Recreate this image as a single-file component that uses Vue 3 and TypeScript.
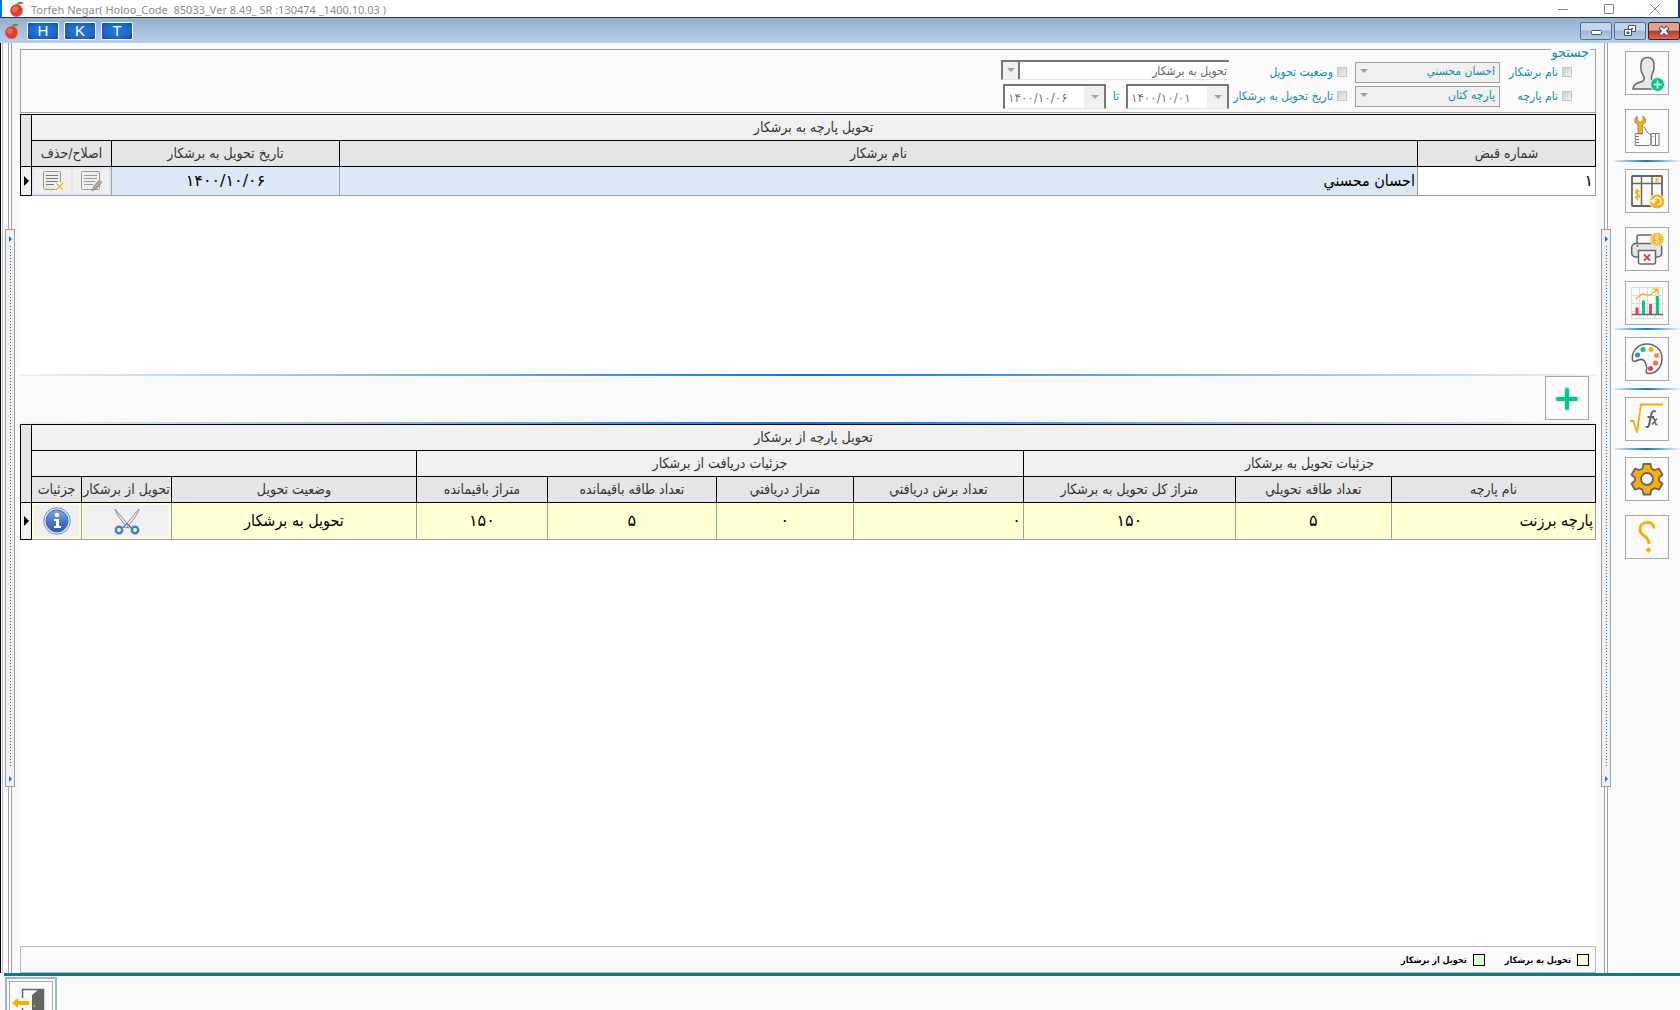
<script setup lang="ts">
import { ref } from 'vue'

interface Tool {
  id: string
  label: string
  tight?: boolean
  rule?: 'after' | 'close'
}

interface Column {
  text: string
  width?: number
}

const title = 'Torfeh Negar( Holoo_Code  85033_Ver 8.49_ SR :130474 _1400.10.03 )'
const shortcuts = ['H', 'K', 'T']

const tools: Tool[] = [
  { id: 'person', label: 'تعريف شخص' },
  { id: 'service', label: 'خدمات', rule: 'after' },
  { id: 'ledger', label: 'جدول قيمت' },
  { id: 'printer', label: 'چاپ', tight: true },
  { id: 'chart', label: 'نمودار', rule: 'close' },
  { id: 'palette', label: 'رنگ', rule: 'after' },
  { id: 'formula', label: 'فرمول', rule: 'after' },
  { id: 'gear', label: 'تنظيمات' },
  { id: 'help', label: 'راهنما' },
]

const deliveryColumns: Column[] = [
  { text: 'اصلاح/حذف', width: 80 },
  { text: 'تاريخ تحويل به برشکار', width: 228 },
  { text: 'نام برشکار' },
  { text: 'شماره قبض', width: 178 },
]

const detailColumns: Column[] = [
  { text: 'جزئيات', width: 50 },
  { text: 'تحويل از برشکار', width: 90 },
  { text: 'وضعيت تحويل' },
  { text: 'متراژ باقيمانده', width: 131 },
  { text: 'تعداد طاقه باقيمانده', width: 169 },
  { text: 'متراژ دريافتي', width: 137 },
  { text: 'تعداد برش دريافتي', width: 170 },
  { text: 'متراژ کل تحويل به برشکار', width: 212 },
  { text: 'تعداد طاقه تحويلي', width: 156 },
  { text: 'نام پارچه', width: 204 },
]

const byCutter = ref(false)
const byFabric = ref(false)
const byStatus = ref(false)
const byDate = ref(false)
</script>

<template>
  <div class="app">
    <header class="titlebar">
      <svg class="logo" viewBox="0 0 16 16" aria-hidden="true">
        <circle cx="7.500" cy="9.500" r="6.300" fill="#e23c31" />
        <circle cx="6" cy="8" r="3" fill="#ee6a55" />
        <path d="M12 5c2 3 2 7-1 9 3-1 4-7 1-9z" fill="#f0942c" />
        <path d="M7 4C9 0 13 0 15 3c-3-1-5 1-8 1z" fill="#4b9b45" />
      </svg>
      <span class="caption">{{ title }}</span>
      <div class="window-buttons">
        <button type="button" aria-label="Minimize"><svg viewBox="0 0 12 12"><path d="M1 6.500h10" /></svg></button>
        <button type="button" aria-label="Maximize"><svg viewBox="0 0 12 12"><path d="M1.500 1.500h9v9h-9z" /></svg></button>
        <button type="button" aria-label="Close"><svg viewBox="0 0 12 12"><path d="M1 1l10 10M11 1L1 11" /></svg></button>
      </div>
    </header>

    <nav class="mdibar">
      <svg class="logo" viewBox="0 0 16 16" aria-hidden="true">
        <circle cx="7.500" cy="9.500" r="6.300" fill="#e23c31" />
        <circle cx="6" cy="8" r="3" fill="#ee6a55" />
        <path d="M12 5c2 3 2 7-1 9 3-1 4-7 1-9z" fill="#f0942c" />
        <path d="M7 4C9 0 13 0 15 3c-3-1-5 1-8 1z" fill="#4b9b45" />
      </svg>
      <button v-for="key in shortcuts" :key="key" type="button" class="shortcut">{{ key }}</button>
      <div class="mdi-buttons">
        <button type="button" aria-label="Minimize child">
          <svg viewBox="0 0 14 12"><rect x="2.500" y="5.500" width="10" height="4" rx="1" fill="#fff" stroke="#44506a" /></svg>
        </button>
        <button type="button" aria-label="Restore child">
          <svg viewBox="0 0 14 12">
            <path d="M5.500.5h7v6h-7z" fill="#fff" stroke="#44506a" /><path d="M8 3h2v1.500H8z" fill="#44506a" />
            <path d="M1.500 4.500h7v6h-7z" fill="#fff" stroke="#44506a" /><path d="M4 7h2v1.500H4z" fill="#8ba4c4" stroke="#44506a" />
          </svg>
        </button>
        <button type="button" class="close" aria-label="Close child">
          <svg viewBox="0 0 14 12">
            <path d="M3 2l8 8M11 2l-8 8" stroke="#4d3038" stroke-width="4.500" /><path d="M3.500 2.500l7 7M10.500 2.500l-7 7" stroke="#fff" stroke-width="2.500" />
          </svg>
        </button>
      </div>
    </nav>

    <div class="workspace">
      <div class="splitter"><i class="rail"></i><div class="grip"><b></b><i></i><b></b></div><i class="rail"></i></div>

      <main class="page">
        <fieldset class="search" dir="rtl">
          <legend>جستجو</legend>
          <label class="check"><input v-model="byCutter" type="checkbox" />نام برشکار</label>
          <span class="combo"><select aria-label="نام برشکار"><option>احسان محسني</option></select><i></i></span>
          <label class="check second"><input v-model="byStatus" type="checkbox" />وضعيت تحويل</label>
          <span class="combo sunken"><select aria-label="وضعيت تحويل"><option>تحويل به برشکار</option></select><i></i></span>

          <label class="check"><input v-model="byFabric" type="checkbox" />نام پارچه</label>
          <span class="combo"><select aria-label="نام پارچه"><option>پارچه کتان</option></select><i></i></span>
          <label class="check second"><input v-model="byDate" type="checkbox" />تاريخ تحويل به برشکار</label>
          <div class="range">
            <span class="combo date"><select dir="ltr" aria-label="از تاريخ"><option>۱۴۰۰/۱۰/۰۱</option></select><i></i></span>
            <span>تا</span>
            <span class="combo date"><select dir="ltr" aria-label="تا تاريخ"><option>۱۴۰۰/۱۰/۰۶</option></select><i></i></span>
          </div>
        </fieldset>

        <section class="upper">
          <table class="grid">
            <colgroup>
              <col class="mark-col" />
              <col v-for="c in deliveryColumns" :key="c.text" :style="c.width ? { width: c.width + 'px' } : undefined" />
            </colgroup>
            <thead>
              <tr><th rowspan="2" class="mark"></th><th colspan="4" class="band">تحويل پارچه به برشکار</th></tr>
              <tr><th v-for="c in deliveryColumns" :key="c.text">{{ c.text }}</th></tr>
            </thead>
            <tbody>
              <tr class="selected">
                <td class="mark"><i class="pointer"></i></td>
                <td class="actions">
                  <div class="pair">
                    <button type="button" aria-label="حذف">
                      <svg viewBox="0 0 24 22">
                        <rect x="3.500" y="1.500" width="17" height="18" rx="1" fill="#eee" stroke="#999" />
                        <path d="M6 5.500h12M6 8.500h12M6 11.500h12M6 14.500h8" stroke="#777" />
                        <path d="M16 13l7 7M23 13l-7 7" stroke="#fff" stroke-width="4" /><path d="M16 13l7 7M23 13l-7 7" stroke="#f5b32c" stroke-width="1.500" />
                      </svg>
                    </button>
                    <button type="button" aria-label="اصلاح">
                      <svg viewBox="0 0 24 22">
                        <rect x="2.500" y="1.500" width="18" height="18" rx="1" fill="#eee" stroke="#999" />
                        <path d="M5 5.500h13M5 8.500h13M5 11.500h11M5 14.500h9" stroke="#999" />
                        <path d="M13 21l2-5 5-6 3 2-5 6z" fill="#aaa" stroke="#777" stroke-width=".7" /><path d="M19 11l1-1 3 2-1 2z" fill="#d7a56b" />
                      </svg>
                    </button>
                  </div>
                </td>
                <td>۱۴۰۰/۱۰/۰۶</td>
                <td class="start name" dir="rtl">احسان محسني</td>
                <td class="start plain" dir="rtl">۱</td>
              </tr>
            </tbody>
          </table>
        </section>

        <div class="toolbar">
          <button type="button" class="tool" aria-label="افزودن">
            <svg viewBox="1 1 42 42"><path d="M22 13.500v19M12.500 23h19" stroke="#c9efe0" stroke-width="6" stroke-linecap="round" /><path d="M22 14v18M13 23h18" stroke="#04c888" stroke-width="4" stroke-linecap="round" /></svg>
          </button>
        </div>

        <section class="lower">
          <table class="grid details">
            <colgroup>
              <col class="mark-col" />
              <col v-for="c in detailColumns" :key="c.text" :style="c.width ? { width: c.width + 'px' } : undefined" />
            </colgroup>
            <thead>
              <tr><th rowspan="3" class="mark"></th><th colspan="10" class="band">تحويل پارچه از برشکار</th></tr>
              <tr>
                <th colspan="3" class="band"></th>
                <th colspan="4" class="band">جزئيات دريافت از برشکار</th>
                <th colspan="3" class="band">جزئيات تحويل به برشکار</th>
              </tr>
              <tr><th v-for="c in detailColumns" :key="c.text">{{ c.text }}</th></tr>
            </thead>
            <tbody>
              <tr class="pending">
                <td class="mark"><i class="pointer"></i></td>
                <td class="actions">
                  <div class="pair">
                    <button type="button" aria-label="جزئيات">
                      <svg class="info" viewBox="0 0 28 28">
                        <defs><linearGradient id="orb" x1="0" y1="0" x2="0" y2="1"><stop offset="0" stop-color="#86a9d8" /><stop offset=".5" stop-color="#4a7cc4" /><stop offset="1" stop-color="#2c59a8" /></linearGradient></defs>
                        <circle cx="14" cy="14" r="13.300" fill="#dfe6f1" stroke="#7a92bb" /><circle cx="14" cy="14" r="11" fill="url(#orb)" stroke="#3c68b0" />
                        <circle cx="14" cy="8" r="2.300" fill="#fff" /><path d="M11 12h5v7h2v2h-7v-2h2v-5h-2z" fill="#fff" />
                      </svg>
                    </button>
                  </div>
                </td>
                <td class="actions">
                  <div class="pair">
                    <button type="button" aria-label="تحويل از برشکار">
                      <svg class="info" viewBox="0 0 28 28">
                        <path d="M2 2l15 18-2 1C9 14 4 9 2 2z" fill="#eceff4" stroke="#7f8896" /><path d="M26 2L11 20l2 1c6-7 11-12 13-19z" fill="#f6f7fa" stroke="#7f8896" />
                        <circle cx="6" cy="23" r="3.200" fill="#fff" stroke="#3a82c6" stroke-width="2.500" /><circle cx="22" cy="23" r="3.200" fill="#fff" stroke="#3a82c6" stroke-width="2.500" />
                        <path d="M9 21l5-4 5 4" fill="none" stroke="#6d7f98" stroke-width="1.500" />
                      </svg>
                    </button>
                  </div>
                </td>
                <td class="name">تحويل به برشکار</td>
                <td>۱۵۰</td>
                <td>۵</td>
                <td>۰</td>
                <td class="start" dir="rtl">۰</td>
                <td>۱۵۰</td>
                <td>۵</td>
                <td class="start name" dir="rtl">پارچه برزنت</td>
              </tr>
            </tbody>
          </table>
        </section>

        <div class="legend" dir="rtl">
          <span><i class="swatch out"></i>تحويل به برشکار</span>
          <span><i class="swatch in"></i>تحويل از برشکار</span>
        </div>
      </main>

      <div class="splitter"><i class="rail"></i><div class="grip"><b></b><i></i><b></b></div><i class="rail"></i></div>

      <aside class="sidebar">
        <template v-for="t in tools" :key="t.id">
          <button type="button" class="tool" :class="{ tight: t.tight, ruled: t.rule }" :aria-label="t.label">
            <svg viewBox="1 1 42 42" fill="none">
              <g v-if="t.id === 'person'">
                <path d="M8 38c0-5 5-6 9-7.500 3-1 2.500-4 1-6.500-2-3-2.500-7-2-11 .5-4.500 3-6.500 6.500-6.500s6 2 6.500 6.500c.5 4-.5 8-2 11-1 3-1 5 1 6l3 8z" fill="#e8e8e8" stroke="#666" stroke-width="1.500" />
                <circle cx="32.500" cy="33.500" r="7" fill="#04c888" stroke="#fafafa" /><path d="M32.500 29.500v8M28.500 33.500h8" stroke="#fff" stroke-width="1.500" />
              </g>
              <g v-else-if="t.id === 'service'">
                <path d="M12 7l-2 2.500v4l3 2.500v9h4.500v-9l3-2.500v-4L18 7v5h-1.500L15 13.500 12.500 12z" fill="#fbad08" stroke="#8c7440" stroke-width=".7" />
                <path d="M18 24.500H10.500q-1 1.500 0 3-1 1.500 0 3-1 1.500 0 3-1 1.500 0 3H24l2-2V26l-4-3-3-5.500M10.500 27.500H14M10.500 30.500H14M10.500 33.500H14" fill="none" stroke="#777" />
                <path d="M26 24.500h8v12h-8zM30.500 24.500v12" stroke="#777" /><circle cx="28" cy="27.500" r=".6" fill="#666" />
              </g>
              <g v-else-if="t.id === 'ledger'">
                <rect x="7" y="7" width="30" height="30" rx="1" stroke="#666" stroke-width="1.800" /><path d="M7 14.500h30M16.500 7v30M27 7v30" stroke="#666" stroke-width="1.500" />
                <path d="M14.500 22.500c-1-1.500-4-1.500-4.200.5 0 2.500 4.200 1.500 4.200 4.200-.2 2-3.500 2-4.500.3M12.300 19.500v12" stroke="#fbad08" stroke-width="1.500" />
                <path d="M32 8.500v5M30 9.500l4 3M34 9.500l-4 3" stroke="#fbad08" />
                <circle cx="32" cy="32.500" r="7.500" fill="#fbad08" stroke="#fafafa" /><path d="M28.500 32a3.700 3.700 0 1 1 3.500 4M26.500 31.500h4l-2 2.500z" stroke="#fff" stroke-width="1.500" />
              </g>
              <g v-else-if="t.id === 'printer'">
                <path d="M12 17V9.500q0-1.500 1.500-1.500H30v9" stroke="#666" stroke-width="1.500" />
                <rect x="6.700" y="16.500" width="30" height="13.500" rx="4" fill="#e4e4e4" stroke="#666" stroke-width="1.500" />
                <path d="M13.500 23.500h17V35q0 2-2 2h-13q-2 0-2-2z" fill="#fff" stroke="#666" stroke-width="1.500" /><circle cx="12.500" cy="19" r="1" fill="#666" />
                <path d="M19 27.500l6 6M25 27.500l-6 6" stroke="#e5424b" stroke-width="2" />
                <circle cx="32" cy="12.500" r="7" fill="#fbad08" stroke="#fafafa" /><circle cx="32" cy="12.500" r="5" stroke="#fff" stroke-width=".6" />
                <path d="M34 10.500c-1-1.200-3.800-1.200-4 .3 0 2 4 1 4 3.200-.2 1.500-3 1.500-4 .2M32 8.500v8" stroke="#fff" />
              </g>
              <g v-else-if="t.id === 'chart'">
                <path d="M6.500 6.500h31v31h-31zM14.500 6.500v31M22.500 6.500v31M30.500 6.500v31M6.500 14.500h31M6.500 22.500h31M6.500 30.500h31" stroke="#ddd" />
                <path d="M12 26.500V33M25.500 23v10" stroke="#e5424b" stroke-width="3" /><path d="M18.500 19.500V33M32.500 15v18" stroke="#04c888" stroke-width="3" />
                <path d="M7 33.500h31" stroke="#666" stroke-width="1.500" /><path d="M11 18l6-5 8 1 8-6M27 8h6v6" stroke="#fbad08" stroke-width="1.200" />
              </g>
              <g v-else-if="t.id === 'palette'">
                <path d="M7.500 23.500C6 14 13 7 22 7c8.500 0 15 6 15 14.500S31 37 23 36.500c-4-1 0-4-1.500-7.500-1-5-3.500-8-8-6-3 1.500-4.500 2-6 .5z" stroke="#666" stroke-width="1.500" />
                <circle cx="12.500" cy="18" r="2.500" fill="#189bb0" /><circle cx="18" cy="12.500" r="2.500" fill="#04c888" /><circle cx="26" cy="12.500" r="2.500" fill="#fbad08" />
                <circle cx="31.500" cy="18.500" r="2.500" fill="#f1934c" /><circle cx="30.500" cy="26" r="2.500" fill="#f0703f" /><circle cx="25.500" cy="31.500" r="2.500" fill="#e5424b" />
              </g>
              <g v-else-if="t.id === 'formula'">
                <path d="M5 24h3.500L12 35.500 16 7.500h22" stroke="#fbad08" stroke-width="1.800" />
                <path d="M31 14.500c-2.500-1.500-4 0-4.600 3L24 28c-.5 2-1.700 2.500-3.500 1.500M22.500 20h6.500" stroke="#666" stroke-width="2" />
                <path d="M27.500 21.500q1.500-.5 2 1l1 4q.5 1.500 2 .7M32 21.500l-5 6" stroke="#666" stroke-width="1.600" />
              </g>
              <g v-else-if="t.id === 'gear'">
                <path d="M18.500 7h7l1 4.500 3 1.700 4.500-1.500 3.500 6-3.500 3v3l3.500 3-3.500 6-4.500-1.500-3 1.700-1 4.600h-7l-1-4.600-3-1.700L10 32.700l-3.500-6 3.500-3v-3l-3.500-3 3.500-6 4.500 1.500 3-1.700z" fill="#fbad08" stroke="#666" stroke-width="1.800" stroke-linejoin="round" />
                <circle cx="22" cy="22" r="6" fill="#fafafa" stroke="#666" stroke-width="1.800" />
              </g>
              <g v-else>
                <path d="M29 13.500C28.500 9 26 7.500 22.500 7.500c-5 0-7.500 3.200-7.500 7 0 7.500 9 5 9 14.500" stroke="#fbad08" stroke-width="3" />
                <path d="M23.500 32l3 3-3 3-3-3z" fill="#fbad08" />
              </g>
            </svg>
          </button>
          <hr v-if="t.rule" :class="t.rule" />
        </template>
      </aside>
    </div>

    <footer class="dock">
      <button type="button" class="exit" aria-label="خروج">
        <span>
          <svg viewBox="1 1 42 42">
            <path d="M13.500 17V8.500h21V43h-21V27" fill="none" stroke="#666" stroke-width="1.500" />
            <path d="M23 14l6-5h6v34H23z" fill="#666" /><circle cx="25.500" cy="25" r="1" fill="#fbad08" /><path d="M3 22l6-5v3h11v4H9v3z" fill="#fbad08" />
          </svg>
        </span>
      </button>
    </footer>
  </div>
</template>

<style>
body {
  background: #fafafa;
}
</style>

<style scoped>
* {
  box-sizing: border-box;
}

.app {
  display: flex;
  flex-direction: column;
  height: 100vh;
  overflow: hidden;
  background: #fafafa;
  font-family: "DejaVu Sans Condensed", "DejaVu Sans", sans-serif;
  font-size: 12px;
  color: #222;
}

button,
select {
  font: inherit;
  color: inherit;
  margin: 0;
  padding: 0;
}

svg {
  display: block;
}

.titlebar {
  display: flex;
  flex: none;
  align-items: center;
  height: 18px;
  padding-left: 7px;
  background: #fff;
  border-left: 2px solid #0078d7;
  border-right: 2px solid #123a86;
  border-bottom: 1px solid #2b3444;
}

.logo {
  width: 16px;
  height: 16px;
}

.caption {
  margin-left: 6px;
  padding-top: 2px;
  font-family: "Noto Sans", sans-serif;
  font-size: 11px;
  line-height: 16px;
  white-space: pre;
  color: #8c8c8c;
}

.window-buttons {
  display: flex;
  margin-left: auto;
}

.window-buttons button {
  display: flex;
  justify-content: center;
  width: 46px;
  border: 0;
  background: none;
}

.window-buttons svg {
  width: 12px;
  height: 12px;
  fill: none;
  stroke: #888;
}

.mdibar {
  display: flex;
  flex: none;
  align-items: center;
  gap: 5px;
  height: 25px;
  padding-left: 4px;
  background: linear-gradient(#95afcf, #b7cfea);
}

.shortcut {
  width: 32px;
  height: 18px;
  border: 1px solid #f4f8fd;
  border-radius: 2px;
  background: radial-gradient(#1f74d6 30%, #1d64c0 70%, #103f8c);
  font-family: "Liberation Sans", sans-serif;
  font-size: 15px;
  line-height: 16px;
  color: #fff;
}

.shortcut:first-of-type {
  margin-left: 2px;
}

.mdi-buttons {
  display: flex;
  gap: 2px;
  margin-left: auto;
}

.mdi-buttons button {
  display: flex;
  align-items: center;
  justify-content: center;
  width: 32px;
  height: 18px;
  border: 1px solid #586e8e;
  border-radius: 2px;
  background: linear-gradient(#c4d6ea 45%, #9bb5d3 50%, #b5cce5);
}

.mdi-buttons svg {
  width: 14px;
  height: 12px;
}

.mdi-buttons .close {
  border-color: #56181c;
  background: linear-gradient(#e3a298 45%, #b93c28 50%, #d2715c);
}

.workspace {
  display: flex;
  flex: 1;
  min-height: 0;
  padding-left: 1px;
  border-left: 1px solid #000;
}

.workspace::before {
  content: "";
  width: 1px;
  margin-right: 2px;
  background: #a9c6ea;
}

.splitter {
  display: flex;
  flex: none;
  flex-direction: column;
  align-items: center;
  width: 10px;
}

.rail {
  flex: 1;
  width: 4px;
  border: solid #a0a0a0;
  border-width: 0 1px;
}

.grip {
  display: flex;
  flex: none;
  flex-direction: column;
  align-items: center;
  width: 10px;
  height: 60%;
  padding: 6px 0 4px;
  border: 1px solid #a0a0a0;
  background: #f0f0f0;
}

.grip i {
  flex: 1;
  width: 1px;
  margin: 4px 0 8px;
  background: repeating-linear-gradient(#0a78d4 0 1px, transparent 1px 3px);
}

.grip b,
.pointer {
  display: block;
  width: 0;
  border: solid transparent;
  border-width: 3px 0 3px 3px;
  border-left-color: #0a78d4;
}

.page {
  display: flex;
  flex: 1;
  flex-direction: column;
  min-width: 0;
  padding: 0 5px;
}

.search {
  display: grid;
  flex: none;
  grid-template-columns: 74px 145px 126px 228px;
  grid-template-rows: 24px 24px;
  align-content: start;
  min-width: 0;
  height: 68px;
  margin: 2px 0 1px;
  padding: 7px 21px 0 0;
  border: 1px solid #a0a0a0;
  font-size: 12px;
  line-height: 14px;
  color: #128fa3;
}

.search legend {
  height: 8px;
  margin-right: -16px;
  padding: 0 1px;
  font-size: 14px;
  line-height: 14px;
}

.check {
  display: flex;
  align-items: center;
  gap: 4px;
  padding-right: 2px;
  white-space: nowrap;
}

.check.second {
  padding-right: 8px;
}

.check input {
  width: 10px;
  height: 10px;
  margin: 0;
  appearance: none;
  border: 1px solid #c4c4c4;
  background: linear-gradient(135deg, #c9ccd2, #f4f4f4);
}

.combo {
  position: relative;
  align-self: center;
  height: 21px;
}

.combo select {
  display: block;
  width: 100%;
  height: 100%;
  padding: 0 4px 2px 18px;
  appearance: none;
  border: 1px solid #a0a0a0;
  border-radius: 0;
  background: #f0f0f0;
}

.combo i {
  position: absolute;
  top: 7px;
  left: 5px;
  width: 0;
  border: solid transparent;
  border-width: 4px 4px 0;
  border-top-color: #a0a0a0;
  pointer-events: none;
}

.combo.sunken {
  align-self: start;
  height: 20px;
}

.sunken select {
  padding: 0 2px 0 18px;
  border-color: #777 #e3e3e3 #e3e3e3 #777;
  border-width: 2px 0 1px 2px;
  background: linear-gradient(90deg, #f0f0f0 15px, #777 15px 17px, #fff 17px);
  color: #666;
}

.sunken i {
  top: 8px;
  left: 6px;
}

.range {
  display: flex;
  align-items: start;
  justify-content: space-between;
  padding-left: 2px;
  line-height: 24px;
}

.combo.date {
  align-self: start;
  width: 103px;
  height: 25px;
}

.date select {
  padding: 0 24px 4px 3px;
  border-color: #777 #777 #e3e3e3;
  border-width: 2px 2px 1px;
  background: linear-gradient(270deg, #f0f0f0 20px, #fff 20px);
  font-family: "DejaVu Sans", sans-serif;
  color: #777;
}

.date i {
  top: 11px;
  right: 7px;
  left: auto;
}

.upper,
.lower {
  background: #fff;
}

.upper {
  flex: none;
  height: 260px;
}

.lower {
  flex: 1;
  min-height: 0;
}

.grid {
  width: 100%;
  border-collapse: collapse;
  table-layout: fixed;
}

.mark-col {
  width: 11px;
}

.grid th {
  height: 26px;
  padding: 0 0 2px;
  border: 1px solid #000;
  background: #e5e5e5;
  font-size: 14px;
  font-weight: 400;
  line-height: 20px;
  white-space: nowrap;
  color: #333;
}

.grid th.band {
  background: #f0f0f0;
}

.grid th.mark {
  background: #e5e5e5;
}

.grid td {
  height: 29px;
  padding: 0;
  border: 1px solid #a0a0a0;
  font-family: "DejaVu Sans", sans-serif;
  font-size: 16px;
  line-height: 20px;
  text-align: center;
  white-space: nowrap;
  color: #000;
}

.grid td.name {
  font-family: inherit;
}

.details td {
  height: 37px;
}

.grid td.mark {
  border: 1px solid #000;
  background: #f0f0f0;
}

.grid td.start {
  padding: 0 2px;
  text-align: start;
}

.selected td {
  background: #dce8f6;
}

.selected td.plain {
  background: #fff;
}

.pending td {
  background: #ffffd4;
}

.pointer {
  margin-left: 3px;
  border-width: 5px 0 5px 5px;
  border-left-color: #000;
}

.pair {
  display: flex;
  gap: 2px;
  height: 24px;
  margin: 0 2px;
}

.details .pair {
  height: 32px;
}

.pair button {
  display: flex;
  flex: 1;
  align-items: center;
  justify-content: center;
  border: 0;
  background: #f0f0f0;
}

.pair svg {
  width: 24px;
  height: 22px;
  fill: none;
}

.pair .info {
  width: 28px;
  height: 28px;
}

.toolbar {
  display: flex;
  flex: none;
  justify-content: flex-end;
  height: 50px;
  padding-right: 7px;
  border: solid;
  border-width: 2px 0;
  border-image: linear-gradient(90deg, #f0f0f0, #0a78d4, #f0f0f0) 2;
}

.tool {
  flex: none;
  width: 44px;
  height: 44px;
  border: 1px solid #a8a8a8;
  background: #fafafa;
}

.tool svg {
  width: 42px;
  height: 42px;
}

.legend {
  display: flex;
  flex: none;
  align-items: center;
  gap: 20px;
  height: 27px;
  padding-right: 6px;
  border: 1px solid #b9b9b9;
  font-size: 9px;
  font-weight: 700;
  line-height: 14px;
  color: #000;
}

.legend span {
  display: flex;
  align-items: center;
  gap: 6px;
}

.swatch {
  width: 12px;
  height: 12px;
  border: 1px solid #000;
}

.swatch.out {
  background: #ffffd4;
}

.swatch.in {
  background: #ddffd4;
}

.sidebar {
  display: flex;
  flex: none;
  flex-direction: column;
  align-items: center;
  width: 69px;
  padding-top: 8px;
  padding-left: 2px;
}

.sidebar .tool {
  margin-bottom: 14px;
}

.sidebar .tool.tight {
  margin-bottom: 10px;
}

.sidebar .tool.ruled {
  margin-bottom: 0;
}

.sidebar hr {
  flex: none;
  width: 100%;
  height: 2px;
  margin: 7px 0;
  border: 0;
  background: linear-gradient(90deg, #f0f0f0, #0a78d4, #f0f0f0);
}

.sidebar hr.close {
  margin: 3px 0 7px;
}

.dock {
  flex: none;
  height: 37px;
  margin-left: 4px;
  padding: 1px;
  border-top: 3px solid #127a80;
  overflow: hidden;
}

.exit {
  display: block;
  width: 52px;
  height: 52px;
  padding: 2px;
  border: 2px solid #9ab3e0;
  background: #fafafa;
}

.exit span {
  display: block;
  width: 44px;
  height: 44px;
  border: 1px solid #a8a8a8;
}

.exit svg {
  width: 42px;
  height: 42px;
}
</style>
